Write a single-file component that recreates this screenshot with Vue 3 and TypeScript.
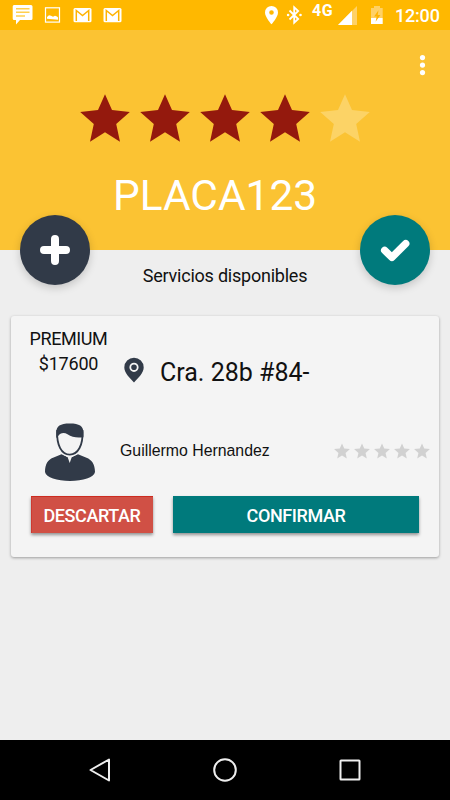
<script setup lang="ts">
const rating = 4
const stars: number[] = [1, 2, 3, 4, 5]
const starPoints = '25,1.3 32,17 49.8,19 36.2,31 40,48.8 25,39.2 10,48.8 13.8,31 0.2,19 18,17'
</script>

<template>
  <div class="screen">
    <div class="status">
      <svg class="notifications" width="130" height="30" viewBox="0 0 130 30">
        <path d="M14 5h17q1.500 0 1.500 1.500v12q0 1.500-1.500 1.500H20l-4 4.500V20h-2q-1.300 0-1.300-1.500v-12Q12.700 5 14 5z" fill="#fff" />
        <path d="M16 8.700h13.500M16 12.300h13.500M16 16h9" stroke="#ffcf4f" stroke-width="1.500" />
        <rect x="45.500" y="7.800" width="14" height="14.300" fill="none" stroke="#fff" stroke-width="1.200" />
        <path d="M47 18.700v-1.700l2-1.700 2 .5 2 1 2-1 2 .8 1 1v2.100z" fill="#fff" />
        <g v-for="x in [73.5, 103.5]" :key="x" :transform="`translate(${x} 0)`">
          <rect x="0" y="8" width="18" height="14.200" rx="1.500" fill="#fff" />
          <path d="M2.800 21V10.500l6.200 5 6.200-5V21" fill="none" stroke="#ffb300" stroke-width="1.500" />
        </g>
      </svg>
      <div class="indicators">
        <svg class="radio" width="46" height="30" viewBox="262 0 46 30">
          <path d="M271.500 5.900a6.500 6.500 0 0 0-6.500 6.500c0 4.800 6.500 11.800 6.500 11.800s6.500-7 6.500-11.800a6.500 6.500 0 0 0-6.500-6.500zm0 4.300a2.300 2.300 0 1 1 0 4.600 2.300 2.300 0 0 1 0-4.600z" fill="#fff" />
          <path d="M289.500 10.500l8.700 8.500-4 3.700V7.300l4 3.700-8.700 8.500" fill="none" stroke="#fff" stroke-width="1.800" />
          <circle cx="288.100" cy="15" r="1.300" fill="#fff" />
          <circle cx="300.500" cy="15" r="1.300" fill="#fff" />
        </svg>
        <span class="network">4G</span>
        <svg class="power" width="50" height="30" viewBox="337 0 50 30">
          <path d="M338 25L357 6V25z" fill="#ffd166" />
          <path d="M338 25L352 10.700V25z" fill="#fff" />
          <path d="M374 6h6v2h2.700v10H371V8h3z" fill="#ffd166" />
          <path d="M371 18h11.700v6H371z" fill="#fff" />
          <path d="M378.500 10.300l-4.400 6.200h2.600l-1.100 5.300 4.800-6.800h-2.700z" fill="#ffb300" />
        </svg>
        <span class="clock">12:00</span>
      </div>
    </div>

    <header class="hero">
      <svg class="more" width="9" height="24" viewBox="0 0 9 24">
        <circle v-for="y in [4.6, 12.1, 19.6]" :key="y" cx="4.500" :cy="y" r="2.600" fill="#fff" />
      </svg>
      <div class="rating">
        <svg v-for="n in stars" :key="n" class="star" :class="{ filled: n <= rating }" viewBox="0 0 50 50">
          <polygon :points="starPoints" />
        </svg>
      </div>
      <h1 class="plate">PLACA123</h1>
      <button class="fab add" aria-label="Agregar">
        <svg width="70" height="70" viewBox="0 0 70 70">
          <path d="M35 24v22M24 35h22" stroke="#fff" stroke-width="8" stroke-linecap="round" />
        </svg>
      </button>
      <button class="fab done" aria-label="Aceptar">
        <svg width="70" height="70" viewBox="0 0 70 70">
          <path d="M24.700 35.400l7.200 6.900L45.700 28.700" fill="none" stroke="#fff" stroke-width="7.400" stroke-linecap="round" stroke-linejoin="round" />
        </svg>
      </button>
    </header>

    <main class="content">
      <p class="heading">Servicios disponibles</p>
      <section class="card">
        <div class="trip">
          <div class="fare"><span class="tier">PREMIUM</span><span>$17600</span></div>
          <svg class="pin" width="20" height="26" viewBox="0 0 20 26">
            <path d="M10 .7A9.700 9.700 0 0 0 .3 10.400C.3 16 6 21 10 25.400 14 21 19.700 16 19.700 10.400A9.700 9.700 0 0 0 10 .7z" fill="#313a48" />
            <circle cx="10" cy="10.300" r="3.700" fill="none" stroke="#f4f4f4" stroke-width="1.800" />
          </svg>
          <span class="address">Cra. 28b #84-</span>
        </div>
        <div class="person">
          <svg class="avatar" width="50" height="59" viewBox="0 0 50 59">
            <path d="M0 49C0 41 3 36.800 8 34.800L16.500 31.300 24.700 35 33 31.300 41.500 34.800C46.500 36.800 50 41 50 49 49 54.500 38 58 25 58S1 54.500 0 49z" fill="#313a48" />
            <path d="M17.500 31l5.200 3.300L24.700 40l2-5.700L32 31z" fill="#f4f4f4" />
            <path d="M12.200 8C12 22 16.500 31.600 24.800 31.600S37.700 22 37.500 8z" fill="#f4f4f4" stroke="#f4f4f4" stroke-width="4" />
            <path d="M12.200 8C11.500 22 16.500 31.600 24.800 31.600S38.200 22 37.500 8z" fill="#f4f4f4" stroke="#313a48" stroke-width="1.800" />
            <path d="M11.300 15V9C11.500 3 15 .4 24.800 .4S38.200 3 38.400 9v5.300C32 15 27 14.500 22.500 11.300 19 8.800 15 10 13.200 13z" fill="#313a48" />
          </svg>
          <span class="name">Guillermo Hernandez</span>
          <div class="score">
            <svg v-for="n in stars" :key="n" class="mini-star" viewBox="0 0 50 50">
              <polygon :points="starPoints" />
            </svg>
          </div>
        </div>
        <div class="actions">
          <button class="action discard"><span>DESCARTAR</span></button>
          <button class="action confirm"><span>CONFIRMAR</span></button>
        </div>
      </section>
    </main>

    <nav class="navbar">
      <svg width="24" height="24" viewBox="0 0 24 24"><path d="M21 1.500v21L2.500 12z" /></svg>
      <svg width="24" height="24" viewBox="0 0 24 24"><circle cx="12" cy="12" r="10.800" /></svg>
      <svg width="24" height="24" viewBox="0 0 24 24"><rect x="2.500" y="2.500" width="19" height="19" rx=".5" /></svg>
    </nav>
  </div>
</template>

<style>
body {
  margin: 0;
}
</style>

<style scoped>
.screen {
  width: 450px;
  height: 800px;
  display: flex;
  flex-direction: column;
  overflow: hidden;
  background: #eee;
  color: #111;
  font-family: Roboto, "Liberation Sans", sans-serif;
}
svg {
  display: block;
  flex: none;
}
button {
  border: 0;
  padding: 0;
  font-family: inherit;
}
.status {
  height: 30px;
  flex: none;
  display: flex;
  justify-content: space-between;
  background: #ffb800;
  color: #fff;
}
.indicators {
  display: flex;
  padding-right: 10px;
}
.network {
  width: 29px;
  box-sizing: border-box;
  padding-left: 4px;
  font-size: 16px;
  line-height: 22px;
  font-weight: 700;
  letter-spacing: 0.5px;
}
.clock {
  width: 53px;
  box-sizing: border-box;
  padding-left: 8px;
  font-size: 18px;
  line-height: 32px;
  font-weight: 500;
  letter-spacing: -0.2px;
  white-space: nowrap;
}
.hero {
  position: relative;
  height: 220px;
  flex: none;
  display: flex;
  flex-direction: column;
  align-items: center;
  background: #fbc333;
}
.more {
  align-self: flex-end;
  margin: 23px 23px 0 0;
}
.rating {
  display: flex;
  gap: 10px;
  margin-top: 16px;
}
.star {
  width: 50px;
  height: 50px;
  fill: #fcd366;
}
.star.filled {
  fill: #94190d;
}
.plate {
  margin: 28px 0 0;
  padding-right: 20px;
  font-size: 42.400px;
  line-height: 50px;
  font-weight: 400;
  color: #fff;
}
.fab {
  position: absolute;
  bottom: -35px;
  width: 70px;
  height: 70px;
  border-radius: 50%;
  box-shadow: 0 3px 8px rgba(0, 0, 0, 0.18);
}
.add {
  left: 20px;
  background: #313a48;
}
.done {
  right: 20px;
  background: #007a7c;
}
.content {
  flex: 1;
  padding: 0 11px;
}
.heading {
  margin: 0 0 31px;
  padding-top: 10px;
  height: 25px;
  font-size: 18px;
  line-height: 31px;
  letter-spacing: -0.23px;
  text-align: center;
}
.card {
  height: 241px;
  background: #f4f4f4;
  border-radius: 3px;
  box-shadow: 0 1px 3px rgba(0, 0, 0, 0.35);
}
.trip {
  height: 105px;
  display: flex;
  align-items: flex-start;
}
.fare {
  width: 113px;
  box-sizing: border-box;
  padding: 10px 0 0 2px;
  display: flex;
  flex-direction: column;
  align-items: center;
  font-size: 18px;
  line-height: 25px;
  letter-spacing: -0.2px;
}
.tier {
  letter-spacing: -0.4px;
}
.pin {
  margin-top: 41px;
}
.address {
  margin: 41px 0 0 16px;
  font-size: 25px;
  line-height: 32px;
}
.person {
  height: 75px;
  display: flex;
  align-items: flex-start;
}
.avatar {
  margin: 2px 0 0 34px;
}
.name {
  margin: 20px 0 0 25px;
  font-family: "Liberation Sans", sans-serif;
  font-size: 15.850px;
  line-height: 20px;
}
.score {
  display: flex;
  gap: 4px;
  margin: 22px 9px 0 auto;
}
.mini-star {
  width: 16px;
  height: 16px;
  fill: #d1d1d1;
}
.actions {
  display: flex;
  gap: 20px;
  padding: 0 20px;
}
.action {
  height: 37px;
  color: #fff;
  font-size: 18px;
  line-height: 39px;
  font-weight: 500;
  letter-spacing: -0.4px;
  box-shadow: 0 2px 3px rgba(0, 0, 0, 0.4);
}
.discard {
  width: 122px;
  background: #d05045;
  box-shadow: inset 0 1px #cc2b20, inset 1px 0 #cd3a30, 0 2px 3px rgba(0, 0, 0, 0.4);
}
.confirm {
  flex: 1;
  background: #007a7c;
}
.navbar {
  height: 60px;
  flex: none;
  display: flex;
  align-items: center;
  justify-content: center;
  gap: 101px;
  background: #000;
}
.navbar svg {
  fill: none;
  stroke: #eee;
  stroke-width: 2;
  stroke-linejoin: round;
}
</style>
